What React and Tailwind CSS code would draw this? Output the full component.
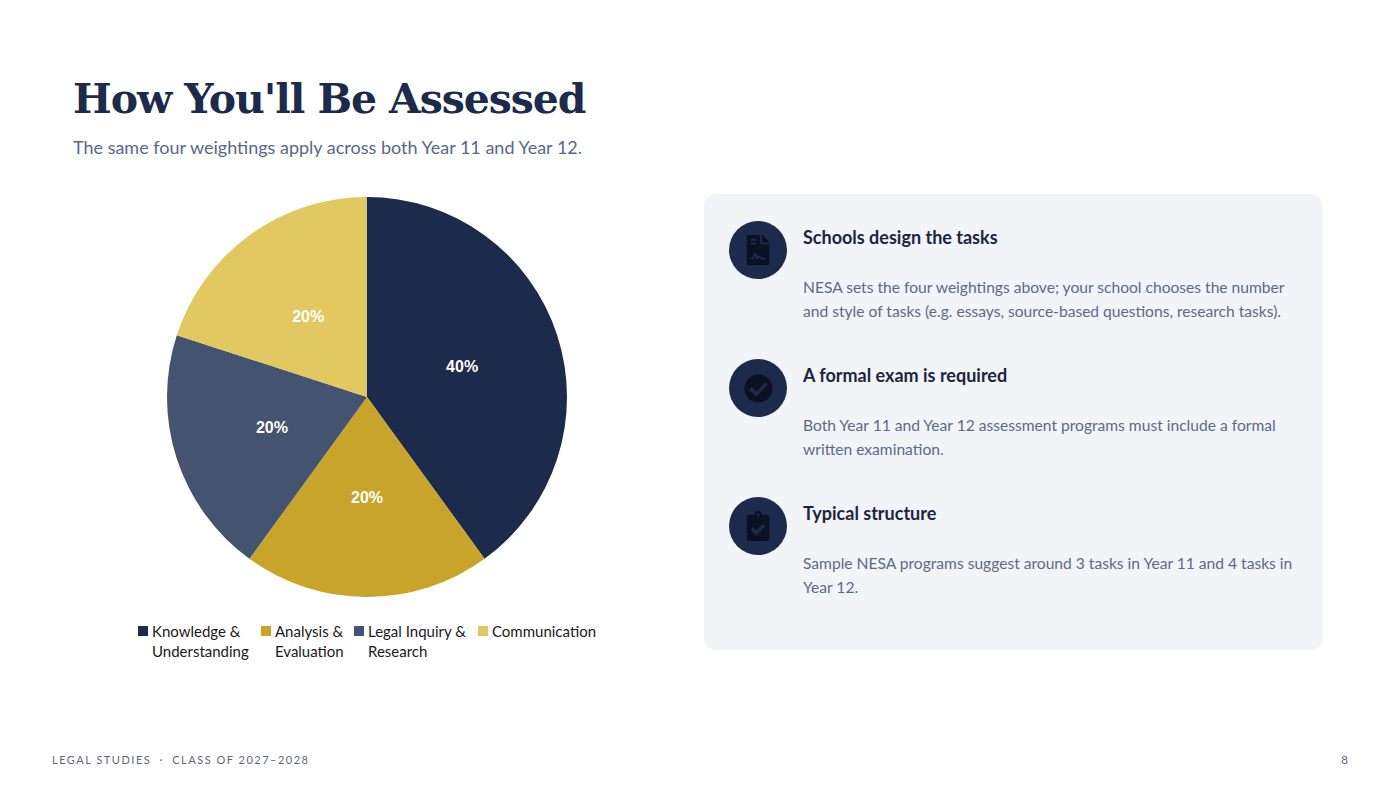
import { FaFileContract, FaCheckCircle, FaClipboardCheck } from 'react-icons/fa'

const slices = [
  { label: 'Knowledge & Understanding', value: 40, color: '#1c2a4b' },
  { label: 'Analysis & Evaluation', value: 20, color: '#c9a42a' },
  { label: 'Legal Inquiry & Research', value: 20, color: '#44536f' },
  { label: 'Communication', value: 20, color: '#e2c861' },
]

const legendWidths = ['w-[123px]', 'w-[93px]', 'w-[124px]', 'w-auto']

const points = [
  {
    icon: FaFileContract,
    size: 30,
    title: 'Schools design the tasks',
    body: 'NESA sets the four weightings above; your school chooses the number and style of tasks (e.g. essays, source-based questions, research tasks).',
  },
  {
    icon: FaCheckCircle,
    size: 29,
    title: 'A formal exam is required',
    body: 'Both Year 11 and Year 12 assessment programs must include a formal written examination.',
  },
  {
    icon: FaClipboardCheck,
    size: 30,
    title: 'Typical structure',
    body: 'Sample NESA programs suggest around 3 tasks in Year 11 and 4 tasks in Year 12.',
  },
]

function PieChart() {
  const r = 200
  const c = 200
  let start = 0
  const total = slices.reduce((s, x) => s + x.value, 0)

  return (
    <svg width="400" height="400" viewBox="0 0 400 400">
      {slices.map((s) => {
        const a0 = (start / total) * Math.PI * 2
        const a1 = ((start + s.value) / total) * Math.PI * 2
        const mid = (a0 + a1) / 2
        start += s.value
        const x0 = c + r * Math.sin(a0)
        const y0 = c - r * Math.cos(a0)
        const x1 = c + r * Math.sin(a1)
        const y1 = c - r * Math.cos(a1)
        const large = a1 - a0 > Math.PI ? 1 : 0
        const lx = c + (r / 2) * Math.sin(mid)
        const ly = c - (r / 2) * Math.cos(mid)
        return (
          <g key={s.label}>
            <path
              d={`M${c},${c} L${x0},${y0} A${r},${r} 0 ${large} 1 ${x1},${y1} Z`}
              fill={s.color}
            />
            <text
              x={lx}
              y={ly}
              fill="#ffffff"
              fontSize="16"
              fontWeight="700"
              fontFamily="'Liberation Sans', Arial, sans-serif"
              textAnchor="middle"
              dominantBaseline="central"
            >
              {s.value}%
            </text>
          </g>
        )
      })}
    </svg>
  )
}

export default function App() {
  return (
    <div className="relative h-[788px] w-[1400px] overflow-hidden bg-white font-['Lato','Noto_Sans',sans-serif]">
      <div className="px-[73px] pt-[72px]">
        <h1 className="font-['DejaVu_Serif',serif] text-[41px] font-bold leading-[54px] tracking-[-1.1px] text-[#1c2a4b]">
          How You'll Be Assessed
        </h1>
        <p className="mt-[8px] text-[18px] leading-[26px] text-[#5a6886]">
          The same four weightings apply across both Year 11 and Year 12.
        </p>
      </div>

      <div className="mt-[34px] grid grid-cols-[588px_1fr] gap-[43px] pl-[73px] pr-[77px]">
        <div className="flex flex-col items-center pt-[3px]">
          <PieChart />
          <div className="mt-[24px] flex items-start text-[15px] leading-[20px] text-[#1a1a1a]">
            {slices.map((s, i) => (
              <div key={s.label} className={`flex items-start ${legendWidths[i]}`}>
                <span
                  className="mr-[4px] mt-[5px] h-[10px] w-[10px] shrink-0"
                  style={{ backgroundColor: s.color }}
                />
                <span>
                  {s.label.includes('&') ? (
                    <>
                      {s.label.split('& ')[0]}&amp;
                      <br />
                      {s.label.split('& ')[1]}
                    </>
                  ) : (
                    s.label
                  )}
                </span>
              </div>
            ))}
          </div>
        </div>

        <div className="flex h-[456px] flex-col gap-9 rounded-xl bg-[#f3f4f8] px-[25px] pt-[27px]">
          {points.map((p) => {
            const Icon = p.icon
            return (
              <div key={p.title} className="flex items-start gap-4">
                <div className="flex h-[58px] w-[58px] shrink-0 items-center justify-center rounded-full bg-[#1c2a4b]">
                  <Icon size={p.size} color="#0b1122" />
                </div>
                <div>
                  <h3 className="mt-[2px] text-[18px] font-bold leading-[28px] text-[#1c2540]">
                    {p.title}
                  </h3>
                  <p className="mt-[24px] text-[15.6px] leading-[24px] text-[#5c6a86]">
                    {p.body}
                  </p>
                </div>
              </div>
            )
          })}
        </div>
      </div>

      <div className="absolute bottom-[20px] left-[52px] right-[52px] flex items-center justify-between text-[11px] leading-[16px] text-[#5f6878]">
        <span className="tracking-[1.5px]">
          LEGAL STUDIES <span className="mx-[4px]">·</span> CLASS OF 2027–2028
        </span>
        <span className="text-[12px] text-[#5a6886]">8</span>
      </div>
    </div>
  )
}
